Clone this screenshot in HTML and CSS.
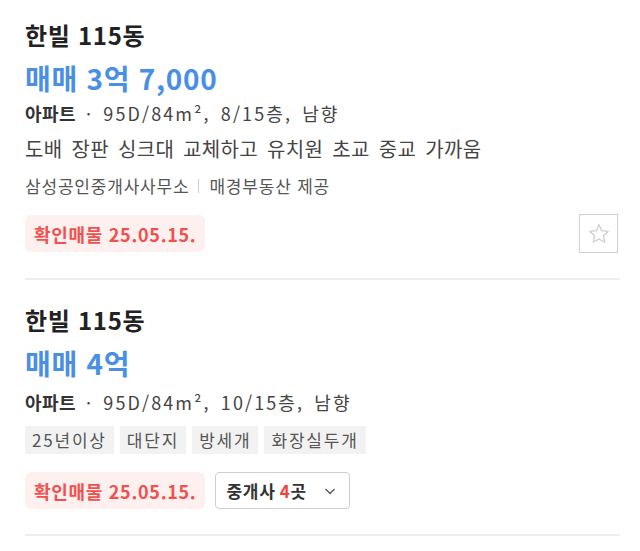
FILE: index.html
```html
<!DOCTYPE html>
<html lang="ko">
<head>
<meta charset="utf-8">
<link rel="stylesheet" href="styles.css">
</head>
<body>
<div class="list">
  <div class="item first">
    <div class="title">한빌 115동</div>
    <div class="price">매매 3억 7,000</div>
    <div class="info"><b>아파트</b> · 95D/84m², 8/15층, 남향</div>
    <div class="desc">도배 장판 싱크대 교체하고 유치원 초교 중교 가까움</div>
    <div class="agency">삼성공인중개사사무소<span class="bar"></span>매경부동산 제공</div>
    <div class="bottom">
      <span class="badge">확인매물 25.05.15.</span>
      <button class="star" aria-label="관심">
        <svg width="24" height="24" viewBox="0 0 24 24"><path d="M12 2.8l2.75 5.9 6.45.75-4.8 4.4 1.3 6.4L12 17.05 6.3 20.25l1.3-6.4-4.8-4.4 6.45-.75z" fill="none" stroke="#cfcfcf" stroke-width="1.3" stroke-linejoin="round"/></svg>
      </button>
    </div>
  </div>
  <div class="item last">
    <div class="title">한빌 115동</div>
    <div class="price">매매 4억</div>
    <div class="info"><b>아파트</b> · 95D/84m², 10/15층, 남향</div>
    <div class="tags">
      <span class="tag">25년이상</span>
      <span class="tag">대단지</span>
      <span class="tag">방세개</span>
      <span class="tag">화장실두개</span>
    </div>
    <div class="bottom">
      <span class="badge">확인매물 25.05.15.</span>
      <button class="agents">중개사 <em>4</em>곳
        <svg width="14" height="14" viewBox="0 0 14 14"><path d="M2.5 5l4.5 4.5L11.5 5" fill="none" stroke="#555" stroke-width="1.3"/></svg>
      </button>
    </div>
  </div>
</div>
</body>
</html>
```
FILE: styles.css
```css
* { box-sizing: border-box; }
body {
  margin: 0;
  background: #fff;
  font-family: "Noto Sans CJK KR", "Noto Sans", sans-serif;
  color: #222;
}
.list {
  padding: 0 20px 0 25px;
}
.item {
  padding: 25px 0 25px;
  border-bottom: 2px solid #eeeeee;
}
.item.first { padding-top: 20px; }
.item.last { padding-bottom: 25px; }
.title {
  font-size: 24px;
  font-weight: 700;
  line-height: 30px;
  color: #222;
  letter-spacing: 0.7px;
}
.price {
  margin-top: 10px;
  font-size: 28px;
  font-weight: 700;
  line-height: 36px;
  color: #4a8fe6;
  letter-spacing: 0.7px;
}
.info, .desc {
  line-height: 35px;
  color: #444;
}
.info {
  font-size: 18px;
  letter-spacing: 2.1px;
  word-spacing: 3px;
}
.last .info { margin-top: 4px; }
.info b { font-weight: 700; color: #333; letter-spacing: 0.4px; }
.desc {
  font-size: 20px;
  letter-spacing: 0.35px;
  word-spacing: 3px;
}
.agency {
  margin-top: 8px;
  font-size: 17px;
  line-height: 24px;
  color: #555;
  letter-spacing: 0.8px;
  display: flex;
  align-items: center;
}
.bar {
  display: inline-block;
  width: 1px;
  height: 14px;
  background: #ccc;
  margin: 0 10px 0 9px;
}
.bottom {
  margin-top: 16px;
  display: flex;
  align-items: center;
  gap: 10px;
}
.tags + .bottom { margin-top: 18px; }
.badge {
  display: inline-flex;
  align-items: center;
  height: 37px;
  padding: 0 9px;
  border-radius: 6px;
  background: #fff0f0;
  color: #f0504f;
  font-size: 18px;
  font-weight: 700;
  letter-spacing: 0.7px;
}
.star {
  margin-left: auto;
  margin-right: 2px;
  width: 39px;
  height: 39px;
  border: 1px solid #d0d0d0;
  background: #fff;
  padding: 0;
  display: flex;
  align-items: center;
  justify-content: center;
}
.tags {
  margin-top: 6px;
  display: flex;
  gap: 6px;
}
.tag {
  height: 28px;
  line-height: 28px;
  padding: 0 7px;
  background: #f2f2f2;
  color: #555;
  font-size: 17px;
  letter-spacing: 1.8px;
}
.agents {
  height: 37px;
  padding: 0 12px 0 10px;
  border: 1px solid #cfcfcf;
  border-radius: 4px;
  background: #fff;
  font-family: inherit;
  font-size: 17px;
  font-weight: 700;
  color: #333;
  display: inline-flex;
  align-items: center;
  letter-spacing: 0.8px;
}
.agents em { font-style: normal; color: #f0433f; margin-left: 4px; }
.agents svg { margin-left: 16px; }
```
